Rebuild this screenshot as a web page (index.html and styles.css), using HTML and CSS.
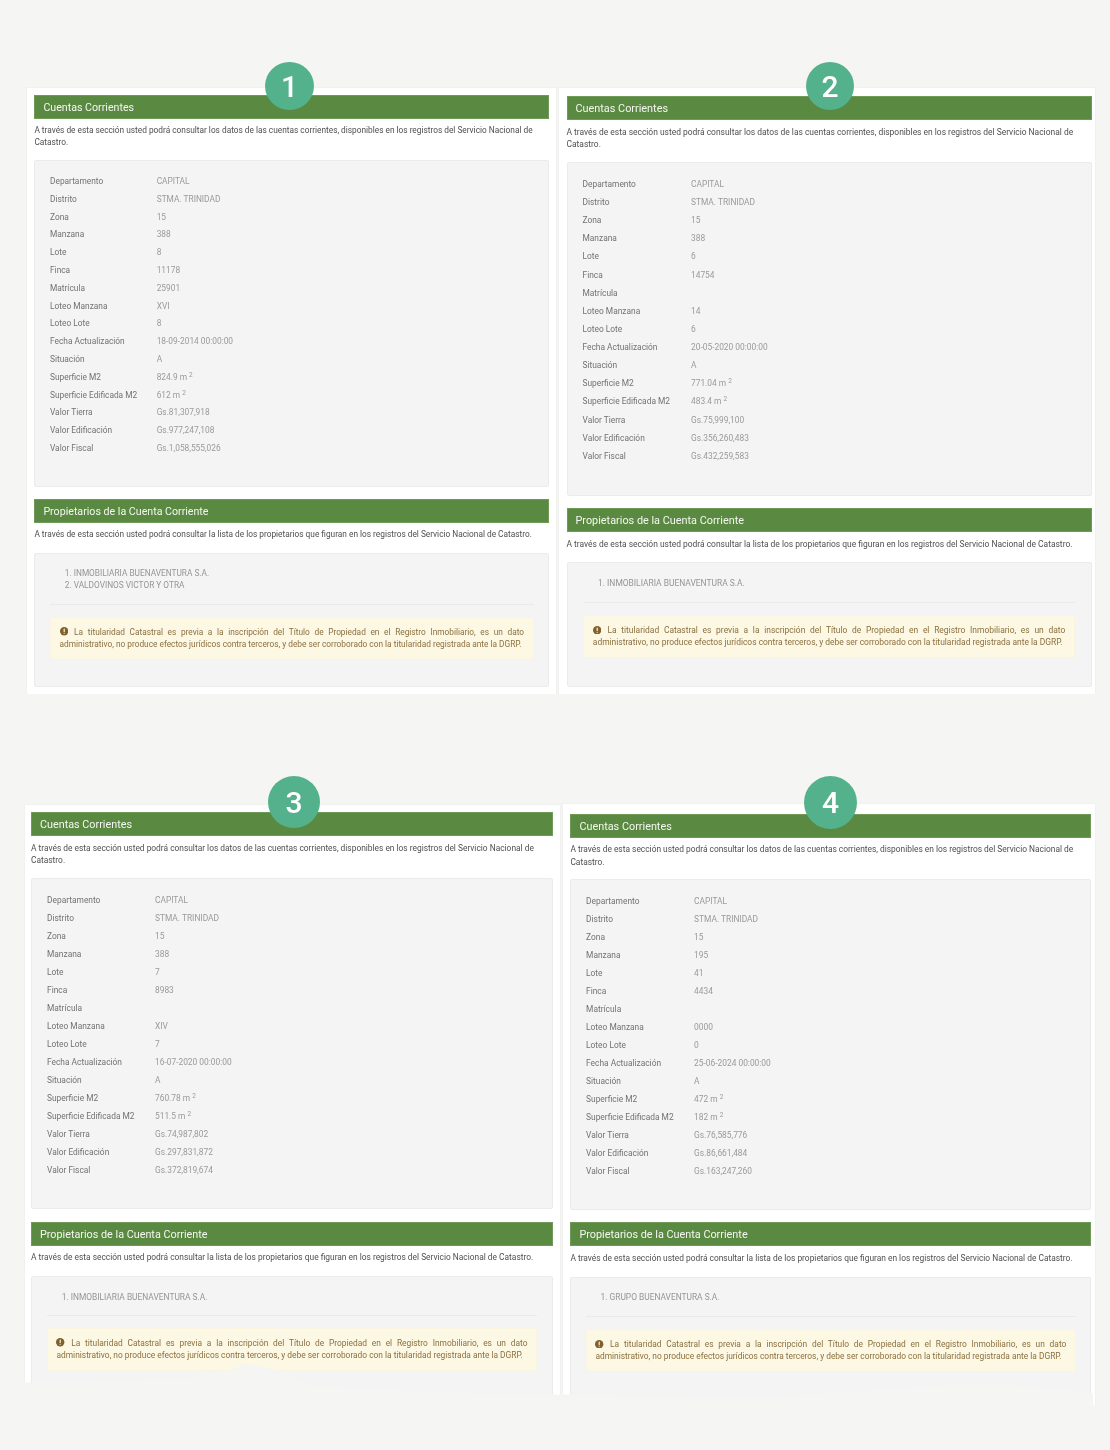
FILE: index.html
```html
<!DOCTYPE html>
<html lang="es">
<head>
<meta charset="utf-8">
<title>Cuentas Corrientes</title>
<link rel="stylesheet" href="styles.css">
</head>
<body>
<main class="canvas">

<section class="shot shot-1">
  <h2 class="bar">Cuentas Corrientes</h2>
  <p class="intro">A través de esta sección usted podrá consultar los datos de las cuentas corrientes, disponibles en los registros del Servicio Nacional de Catastro.</p>
  <div class="well data">
    <div class="row"><b>Departamento</b><span>CAPITAL</span></div>
    <div class="row"><b>Distrito</b><span>STMA. TRINIDAD</span></div>
    <div class="row"><b>Zona</b><span>15</span></div>
    <div class="row"><b>Manzana</b><span>388</span></div>
    <div class="row"><b>Lote</b><span>8</span></div>
    <div class="row"><b>Finca</b><span>11178</span></div>
    <div class="row"><b>Matrícula</b><span>25901</span></div>
    <div class="row"><b>Loteo Manzana</b><span>XVI</span></div>
    <div class="row"><b>Loteo Lote</b><span>8</span></div>
    <div class="row"><b>Fecha Actualización</b><span>18-09-2014 00:00:00</span></div>
    <div class="row"><b>Situación</b><span>A</span></div>
    <div class="row"><b>Superficie M2</b><span>824.9 m <sup>2</sup></span></div>
    <div class="row"><b>Superficie Edificada M2</b><span>612 m <sup>2</sup></span></div>
    <div class="row"><b>Valor Tierra</b><span>Gs.81,307,918</span></div>
    <div class="row"><b>Valor Edificación</b><span>Gs.977,247,108</span></div>
    <div class="row"><b>Valor Fiscal</b><span>Gs.1,058,555,026</span></div>
  </div>
  <h2 class="bar bar-second">Propietarios de la Cuenta Corriente</h2>
  <p class="intro">A través de esta sección usted podrá consultar la lista de los propietarios que figuran en los registros del Servicio Nacional de Catastro.</p>
  <div class="well owners">
    <ol class="owner-list"><li>INMOBILIARIA BUENAVENTURA S.A.</li><li>VALDOVINOS VICTOR Y OTRA</li></ol>
    <hr class="rule">
    <p class="alert"><svg class="alert-icon" viewBox="0 0 16 16"><circle cx="8" cy="8" r="8"/><rect x="6.9" y="3" width="2.2" height="6.5" rx=".6" class="mark"/><rect x="6.9" y="10.8" width="2.2" height="2.2" rx=".6" class="mark"/></svg> La titularidad Catastral es previa a la inscripción del Título de Propiedad en el Registro Inmobiliario, es un dato administrativo, no produce efectos jurídicos contra terceros, y debe ser corroborado con la titularidad registrada ante la DGRP.</p>
  </div>
</section>

<section class="shot shot-2">
  <h2 class="bar">Cuentas Corrientes</h2>
  <p class="intro">A través de esta sección usted podrá consultar los datos de las cuentas corrientes, disponibles en los registros del Servicio Nacional de Catastro.</p>
  <div class="well data">
    <div class="row"><b>Departamento</b><span>CAPITAL</span></div>
    <div class="row"><b>Distrito</b><span>STMA. TRINIDAD</span></div>
    <div class="row"><b>Zona</b><span>15</span></div>
    <div class="row"><b>Manzana</b><span>388</span></div>
    <div class="row"><b>Lote</b><span>6</span></div>
    <div class="row"><b>Finca</b><span>14754</span></div>
    <div class="row"><b>Matrícula</b><span></span></div>
    <div class="row"><b>Loteo Manzana</b><span>14</span></div>
    <div class="row"><b>Loteo Lote</b><span>6</span></div>
    <div class="row"><b>Fecha Actualización</b><span>20-05-2020 00:00:00</span></div>
    <div class="row"><b>Situación</b><span>A</span></div>
    <div class="row"><b>Superficie M2</b><span>771.04 m <sup>2</sup></span></div>
    <div class="row"><b>Superficie Edificada M2</b><span>483.4 m <sup>2</sup></span></div>
    <div class="row"><b>Valor Tierra</b><span>Gs.75,999,100</span></div>
    <div class="row"><b>Valor Edificación</b><span>Gs.356,260,483</span></div>
    <div class="row"><b>Valor Fiscal</b><span>Gs.432,259,583</span></div>
  </div>
  <h2 class="bar bar-second">Propietarios de la Cuenta Corriente</h2>
  <p class="intro">A través de esta sección usted podrá consultar la lista de los propietarios que figuran en los registros del Servicio Nacional de Catastro.</p>
  <div class="well owners">
    <ol class="owner-list"><li>INMOBILIARIA BUENAVENTURA S.A.</li></ol>
    <hr class="rule">
    <p class="alert"><svg class="alert-icon" viewBox="0 0 16 16"><circle cx="8" cy="8" r="8"/><rect x="6.9" y="3" width="2.2" height="6.5" rx=".6" class="mark"/><rect x="6.9" y="10.8" width="2.2" height="2.2" rx=".6" class="mark"/></svg> La titularidad Catastral es previa a la inscripción del Título de Propiedad en el Registro Inmobiliario, es un dato administrativo, no produce efectos jurídicos contra terceros, y debe ser corroborado con la titularidad registrada ante la DGRP.</p>
  </div>
</section>

<section class="shot shot-3">
  <h2 class="bar">Cuentas Corrientes</h2>
  <p class="intro">A través de esta sección usted podrá consultar los datos de las cuentas corrientes, disponibles en los registros del Servicio Nacional de Catastro.</p>
  <div class="well data">
    <div class="row"><b>Departamento</b><span>CAPITAL</span></div>
    <div class="row"><b>Distrito</b><span>STMA. TRINIDAD</span></div>
    <div class="row"><b>Zona</b><span>15</span></div>
    <div class="row"><b>Manzana</b><span>388</span></div>
    <div class="row"><b>Lote</b><span>7</span></div>
    <div class="row"><b>Finca</b><span>8983</span></div>
    <div class="row"><b>Matrícula</b><span></span></div>
    <div class="row"><b>Loteo Manzana</b><span>XIV</span></div>
    <div class="row"><b>Loteo Lote</b><span>7</span></div>
    <div class="row"><b>Fecha Actualización</b><span>16-07-2020 00:00:00</span></div>
    <div class="row"><b>Situación</b><span>A</span></div>
    <div class="row"><b>Superficie M2</b><span>760.78 m <sup>2</sup></span></div>
    <div class="row"><b>Superficie Edificada M2</b><span>511.5 m <sup>2</sup></span></div>
    <div class="row"><b>Valor Tierra</b><span>Gs.74,987,802</span></div>
    <div class="row"><b>Valor Edificación</b><span>Gs.297,831,872</span></div>
    <div class="row"><b>Valor Fiscal</b><span>Gs.372,819,674</span></div>
  </div>
  <h2 class="bar bar-second">Propietarios de la Cuenta Corriente</h2>
  <p class="intro">A través de esta sección usted podrá consultar la lista de los propietarios que figuran en los registros del Servicio Nacional de Catastro.</p>
  <div class="well owners">
    <ol class="owner-list"><li>INMOBILIARIA BUENAVENTURA S.A.</li></ol>
    <hr class="rule">
    <p class="alert"><svg class="alert-icon" viewBox="0 0 16 16"><circle cx="8" cy="8" r="8"/><rect x="6.9" y="3" width="2.2" height="6.5" rx=".6" class="mark"/><rect x="6.9" y="10.8" width="2.2" height="2.2" rx=".6" class="mark"/></svg> La titularidad Catastral es previa a la inscripción del Título de Propiedad en el Registro Inmobiliario, es un dato administrativo, no produce efectos jurídicos contra terceros, y debe ser corroborado con la titularidad registrada ante la DGRP.</p>
  </div>
</section>

<section class="shot shot-4">
  <h2 class="bar">Cuentas Corrientes</h2>
  <p class="intro">A través de esta sección usted podrá consultar los datos de las cuentas corrientes, disponibles en los registros del Servicio Nacional de Catastro.</p>
  <div class="well data">
    <div class="row"><b>Departamento</b><span>CAPITAL</span></div>
    <div class="row"><b>Distrito</b><span>STMA. TRINIDAD</span></div>
    <div class="row"><b>Zona</b><span>15</span></div>
    <div class="row"><b>Manzana</b><span>195</span></div>
    <div class="row"><b>Lote</b><span>41</span></div>
    <div class="row"><b>Finca</b><span>4434</span></div>
    <div class="row"><b>Matrícula</b><span></span></div>
    <div class="row"><b>Loteo Manzana</b><span>0000</span></div>
    <div class="row"><b>Loteo Lote</b><span>0</span></div>
    <div class="row"><b>Fecha Actualización</b><span>25-06-2024 00:00:00</span></div>
    <div class="row"><b>Situación</b><span>A</span></div>
    <div class="row"><b>Superficie M2</b><span>472 m <sup>2</sup></span></div>
    <div class="row"><b>Superficie Edificada M2</b><span>182 m <sup>2</sup></span></div>
    <div class="row"><b>Valor Tierra</b><span>Gs.76,585,776</span></div>
    <div class="row"><b>Valor Edificación</b><span>Gs.86,661,484</span></div>
    <div class="row"><b>Valor Fiscal</b><span>Gs.163,247,260</span></div>
  </div>
  <h2 class="bar bar-second">Propietarios de la Cuenta Corriente</h2>
  <p class="intro">A través de esta sección usted podrá consultar la lista de los propietarios que figuran en los registros del Servicio Nacional de Catastro.</p>
  <div class="well owners">
    <ol class="owner-list"><li>GRUPO BUENAVENTURA S.A.</li></ol>
    <hr class="rule">
    <p class="alert"><svg class="alert-icon" viewBox="0 0 16 16"><circle cx="8" cy="8" r="8"/><rect x="6.9" y="3" width="2.2" height="6.5" rx=".6" class="mark"/><rect x="6.9" y="10.8" width="2.2" height="2.2" rx=".6" class="mark"/></svg> La titularidad Catastral es previa a la inscripción del Título de Propiedad en el Registro Inmobiliario, es un dato administrativo, no produce efectos jurídicos contra terceros, y debe ser corroborado con la titularidad registrada ante la DGRP.</p>
  </div>
</section>

<svg class="torn" viewBox="0 0 1110 100" preserveAspectRatio="none" aria-hidden="true">
  <path d="M0 33 L24 32.7 L190 28 L230 20.5 L245 13.5 L280 20 L306 35 L421 41.7 L497 44 L600 45 L758 48 L880 40 L976 33 L1049 38 L1093 43 L1093 55 L1096 55 L1096 45 L1110 45 L1110 100 L0 100 Z"/>
</svg>

<span class="badge badge-1">1</span>
<span class="badge badge-2">2</span>
<span class="badge badge-3">3</span>
<span class="badge badge-4">4</span>
</main>
</body>
</html>
```

FILE: styles.css
```css
* { box-sizing: border-box; }
html, body { margin: 0; padding: 0; }
body { background: #f5f5f3; font-family: Roboto, "Liberation Sans", sans-serif; }

.canvas { position: relative; width: 1110px; height: 1450px; overflow: hidden; }

.shot {
  position: absolute;
  background: #fff;
  overflow: hidden;
  filter: blur(0.4px);
  border: 1px solid #f1f1ef;
  border-bottom: 0;
  padding: var(--pad-top) var(--pad-right) 0 var(--pad-left);
}
.shot-1 {
  left: 25.5px; top: 87px; width: 531.5px; height: 607px;
  --pad-top: 7px; --pad-left: 7.9px; --pad-right: 6.8px;
  --bar-fs: 10.65px; --fs: 8.31px; --row-fs: 8.35px; --lh: 11.7px;
  --m1: 5.85px; --b1: 11.75px; --pt: 11.2px; --data-h: 327.3px; --row: 17.8px; --col: 106.7px; --data-x: 14.6px;
  --gap2: 12px; --m2: 5.65px; --b2: 12.65px;
  --own-h: 133.4px; --own-x: 14.4px; --own-pt: 14px; --rule-t: 12.6px; --rule-b: 11.8px; --al-pt: 7.25px;
}
.shot-2 {
  left: 558px; top: 87px; width: 538px; height: 607px;
  --pad-top: 8px; --pad-left: 7.5px; --pad-right: 3.4px;
  --bar-fs: 10.87px; --fs: 8.45px; --row-fs: 8.4px; --lh: 12px;
  --m1: 5.7px; --b1: 12.3px; --pt: 11.95px; --data-h: 333.7px; --row: 18.13px; --col: 108.5px; --data-x: 15px;
  --gap2: 12.6px; --m2: 6.2px; --b2: 11.8px;
  --own-h: 124.4px; --own-x: 15.5px; --own-pt: 15px; --rule-t: 12.4px; --rule-b: 11.7px; --al-pt: 8px;
}
.shot-3 {
  left: 24px; top: 804px; width: 537px; height: 620px;
  --pad-top: 7px; --pad-left: 6px; --pad-right: 7px;
  --bar-fs: 10.8px; --fs: 8.4px; --row-fs: 8.4px; --lh: 12px;
  --m1: 6.3px; --b1: 12px; --pt: 11.7px; --data-h: 331px; --row: 18px; --col: 108px; --data-x: 15px;
  --gap2: 12.4px; --m2: 5.6px; --b2: 12.4px;
  --own-h: 200px; --own-x: 14.7px; --own-pt: 15.2px; --rule-t: 11.8px; --rule-b: 11.6px; --al-pt: 7.8px;
}
.shot-4 {
  left: 562px; top: 803px; width: 534px; height: 621px;
  --pad-top: 9.5px; --pad-left: 7.4px; --pad-right: 3.7px;
  --bar-fs: 10.85px; --fs: 8.4px; --row-fs: 8.4px; --lh: 12.6px;
  --m1: 5.5px; --b1: 11.1px; --pt: 11.7px; --data-h: 331px; --row: 18px; --col: 108px; --data-x: 14.7px;
  --gap2: 12px; --m2: 5.4px; --b2: 12.3px;
  --own-h: 200px; --own-x: 14.2px; --own-pt: 14.5px; --rule-t: 11.8px; --rule-b: 12.4px; --al-pt: 7.85px;
}

.bar {
  margin: 0;
  height: 24px;
  padding: 0 8px;
  background: #5a8941;
  border: 1px solid #6f9a58;
  color: #f4f7f1;
  font-size: var(--bar-fs);
  font-weight: 400;
  line-height: 23px;
}
.bar-second { margin-top: var(--gap2); }

.intro {
  margin: var(--m1) 0 var(--b1);
  color: #4f4f4f;
  font-size: var(--fs);
  line-height: var(--lh);
}
.bar-second + .intro { margin: var(--m2) 0 var(--b2); }

.well {
  background: #f4f4f4;
  border: 1px solid #ebebeb;
  border-radius: 2px;
}
.data {
  height: var(--data-h);
  padding: var(--pt) var(--data-x) 0;
}
.row {
  display: grid;
  grid-template-columns: var(--col) 1fr;
  height: var(--row);
  align-items: center;
  font-size: var(--row-fs);
}
.row b { font-weight: 400; color: #727272; }
.row span { color: #9a9a9a; }
sup { font-size: 6.5px; line-height: 0; vertical-align: 3px; }

.owners { height: var(--own-h); padding: var(--own-pt) var(--own-x) 0; }
.owner-list {
  margin: 0;
  padding: 0 0 0 15px;
  color: #959595;
  font-size: var(--fs);
  line-height: 11.8px;
  list-style-position: inside;
}
.rule { margin: var(--rule-t) 0 var(--rule-b); border: 0; border-top: 1px solid #e9e9e9; }
.alert {
  margin: 0;
  padding: var(--al-pt) 8.8px 8.4px;
  background: #fdf8e4;
  border: 1px solid #f9f4e2;
  border-radius: 2px;
  color: #8a7040;
  font-size: var(--fs);
  line-height: 12.3px;
  text-align: justify;
}
.alert-icon { width: 8.4px; height: 8.4px; vertical-align: -1px; fill: #80602c; margin-right: 1.5px; }
.mark { fill: #fdf8e4; }

.torn {
  position: absolute;
  left: 0;
  top: 1350px;
  width: 1110px;
  height: 100px;
  fill: #f5f5f3;
}

.badge {
  position: absolute;
  display: flex;
  align-items: center;
  justify-content: center;
  border-radius: 50%;
  background: #53b28c;
  color: #fff;
  font-family: Roboto, "Liberation Sans", sans-serif;
  font-weight: 500;
  filter: blur(0.3px);
}
.badge-1 { left: 265px; top: 62px; width: 49px; height: 48px; font-size: 30px; }
.badge-2 { left: 806px; top: 62px; width: 48px; height: 48px; font-size: 30px; }
.badge-3 { left: 268px; top: 776px; width: 52px; height: 52px; font-size: 30px; }
.badge-4 { left: 804px; top: 776px; width: 53px; height: 53px; font-size: 30px; }
```
